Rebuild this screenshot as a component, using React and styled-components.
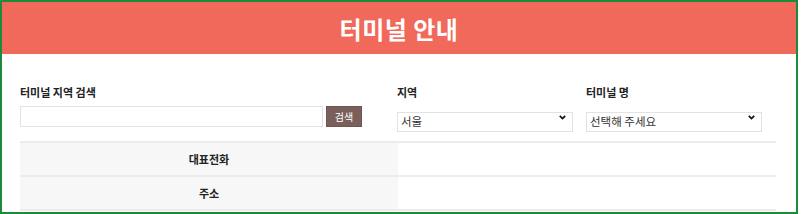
import React from "react";
import styled, { createGlobalStyle } from "styled-components";

const GlobalStyle = createGlobalStyle`
  body {
    margin: 0;
    background: #fff;
    font-family: "Noto Sans CJK KR", "Noto Sans", sans-serif;
    color: #222;
  }
`;

const Frame = styled.div`
  box-sizing: border-box;
  width: 798px;
  height: 214px;
  border: 2px solid #1c8a3b;
  overflow: hidden;
`;

const Header = styled.header`
  height: 52px;
  background: #f0695a;
  display: flex;
  align-items: center;
  justify-content: center;
  h1 {
    margin: 0;
    color: #fff;
    font-size: 24px;
    font-weight: 700;
    letter-spacing: 0.5px;
    line-height: 1;
    padding-top: 1px;
  }
`;

const Body = styled.div`
  padding: 30px 20px 0 18px;
`;

const SearchBar = styled.div`
  display: grid;
  grid-template-columns: 342px 176px 176px;
  column-gap: 35px;
  & > :nth-child(3) {
    margin-left: -22px;
  }
`;

const Field = styled.div`
  display: flex;
  flex-direction: column;
  gap: 6px;
`;

const Label = styled.label`
  font-size: 11px;
  font-weight: 700;
  line-height: 16px;
  color: #222;
`;

const Row = styled.div`
  display: flex;
  gap: 3px;
`;

const TextInput = styled.input`
  box-sizing: border-box;
  width: 303px;
  height: 21px;
  border: 1px solid #e2e2e2;
  padding: 0 4px;
  outline: none;
`;

const Button = styled.button`
  box-sizing: border-box;
  width: 36px;
  height: 21px;
  border: 1px solid #6e5550;
  background: #7a605b;
  color: #fff;
  font-family: inherit;
  font-size: 10px;
  padding: 0;
  cursor: pointer;
`;

const SelectBox = styled.div`
  position: relative;
  width: 176px;
  height: 20px;
  margin-top: 1px;
  svg {
    position: absolute;
    right: 7px;
    top: 8px;
    pointer-events: none;
  }
`;

const Select = styled.select`
  box-sizing: border-box;
  appearance: none;
  width: 100%;
  height: 100%;
  border: 1px solid #e2e2e2;
  background: #fff;
  font-family: inherit;
  font-size: 11.5px;
  line-height: 16px;
  color: #333;
  padding: 0 3px 3px;
  outline: none;
`;

const Table = styled.div`
  margin-top: 14px;
  width: 756px;
  border-top: 2px solid #ececec;
`;

const TableRow = styled.div`
  display: grid;
  grid-template-columns: 378px 1fr;
  height: 32px;
  border-bottom: 2px solid #ececec;
`;

const HeadCell = styled.div`
  background: #f7f7f7;
  display: flex;
  align-items: center;
  justify-content: center;
  font-size: 11px;
  font-weight: 700;
  color: #222;
`;

const Cell = styled.div`
  background: #fff;
`;

const Chevron = () => (
  <svg width="7" height="5" viewBox="0 0 7 5">
    <path d="M0.8 0.8 L3.5 3.6 L6.2 0.8" fill="none" stroke="#111" strokeWidth="1.7" />
  </svg>
);

const Dropdown = ({ options }) => (
  <SelectBox>
    <Select defaultValue={options[0]}>
      {options.map((o) => (
        <option key={o}>{o}</option>
      ))}
    </Select>
    <Chevron />
  </SelectBox>
);

export default function App() {
  return (
    <>
      <GlobalStyle />
      <Frame>
        <Header>
          <h1>터미널 안내</h1>
        </Header>
        <Body>
          <SearchBar>
            <Field>
              <Label>터미널 지역 검색</Label>
              <Row>
                <TextInput type="text" />
                <Button>검색</Button>
              </Row>
            </Field>
            <Field>
              <Label>지역</Label>
              <Dropdown options={["서울", "경기", "인천", "강원"]} />
            </Field>
            <Field>
              <Label>터미널 명</Label>
              <Dropdown options={["선택해 주세요"]} />
            </Field>
          </SearchBar>
          <Table>
            <TableRow>
              <HeadCell>대표전화</HeadCell>
              <Cell />
            </TableRow>
            <TableRow>
              <HeadCell>주소</HeadCell>
              <Cell />
            </TableRow>
          </Table>
        </Body>
      </Frame>
    </>
  );
}
